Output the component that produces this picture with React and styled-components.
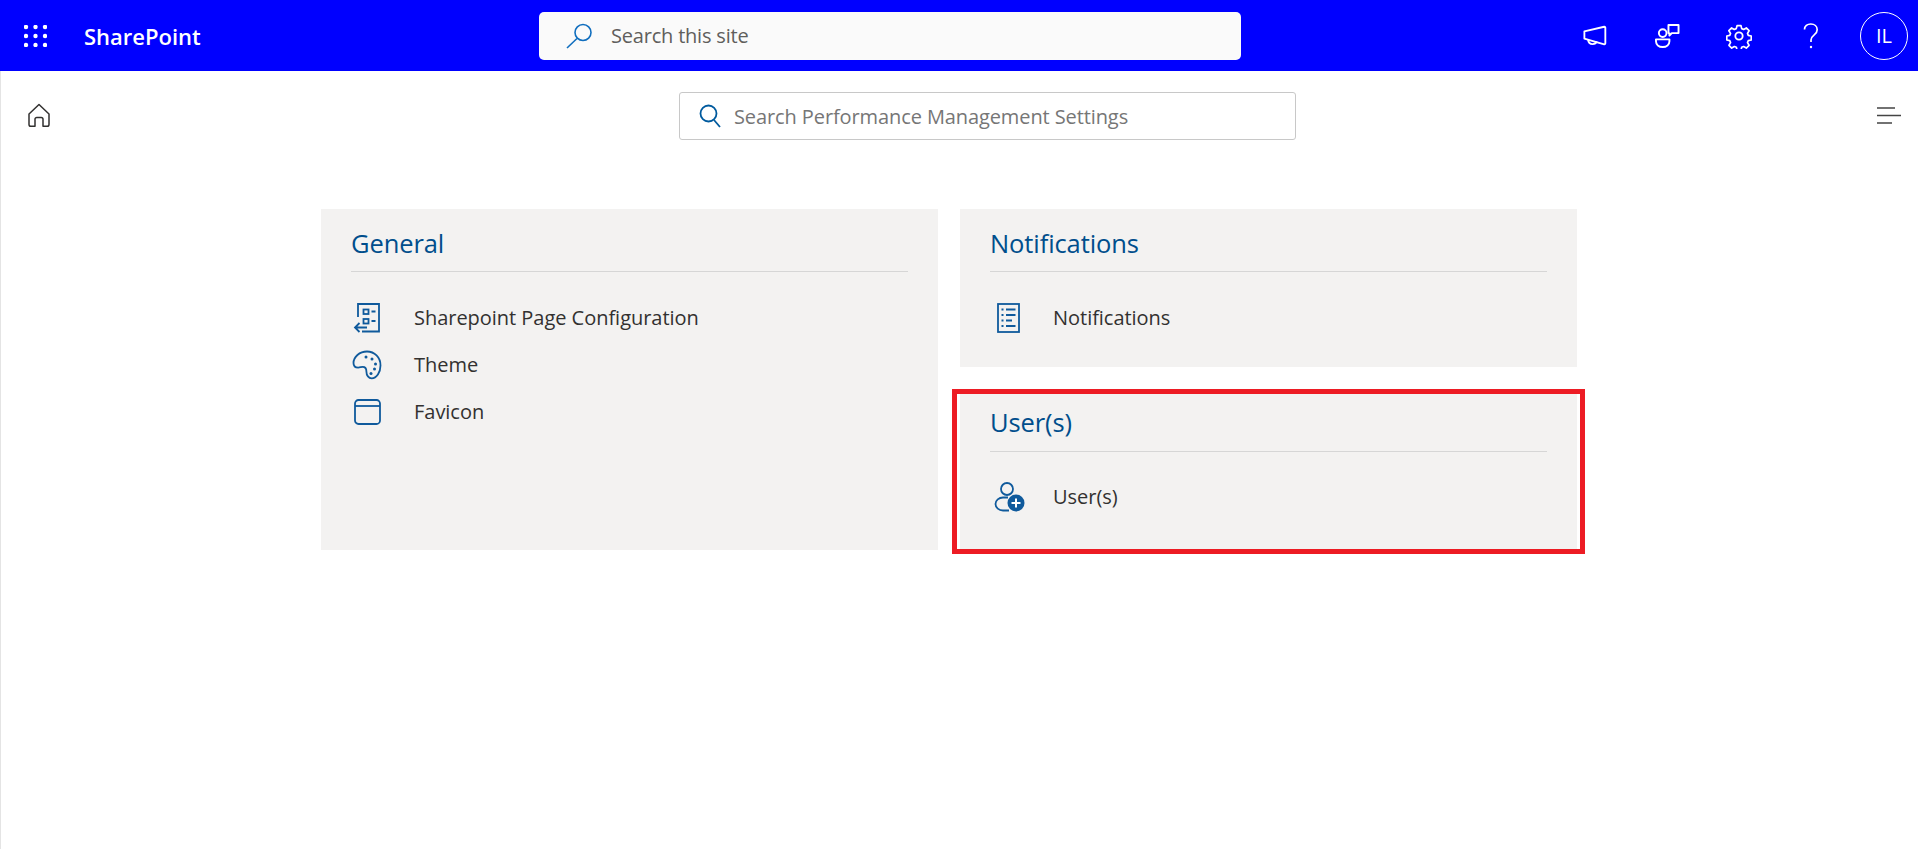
import React from "react";
import styled, { createGlobalStyle } from "styled-components";

const Global = createGlobalStyle`
  html, body { margin: 0; padding: 0; background: #fff; }
  body { font-family: "Open Sans", "Noto Sans", sans-serif; }
  * { box-sizing: border-box; }
`;

const Page = styled.div`
  width: 1918px;
  height: 849px;
  overflow: hidden;
  display: flex;
  flex-direction: column;
`;

const SuiteBar = styled.header`
  height: 71px;
  background: #0000ff;
  display: flex;
  align-items: center;
  color: #fff;
  flex: none;
`;

const Brand = styled.div`
  width: 539px;
  flex: none;
  display: flex;
  align-items: center;
  padding-left: 24px;
`;

const BrandName = styled.span`
  margin-left: 37px;
  font-size: 22px;
  font-weight: 600;
`;

const SiteSearch = styled.div`
  width: 702px;
  height: 48px;
  background: #fafafa;
  border-radius: 5px;
  display: flex;
  align-items: center;
  padding-left: 26px;
  gap: 18px;
  font-size: 20px;
  letter-spacing: -0.2px;
  color: #605e5c;
`;

const SuiteActions = styled.div`
  margin-left: auto;
  display: flex;
  align-items: center;
  padding-right: 10px;
`;

const ActionSlot = styled.div`
  width: 72px;
  height: 48px;
  display: flex;
  align-items: center;
  justify-content: center;
`;

const Avatar = styled.div`
  width: 48px;
  height: 48px;
  margin-left: 13px;
  border: 1px solid #fff;
  border-radius: 50%;
  display: flex;
  align-items: center;
  justify-content: center;
  font-size: 20px;
`;

const Body = styled.main`
  flex: 1;
  border-left: 1px solid #e4e4e4;
  padding-top: 21px;
`;

const Toolbar = styled.div`
  height: 48px;
  display: grid;
  grid-template-columns: 678px 617px 1fr;
  align-items: center;
`;

const HomeCell = styled.div`
  padding-left: 26px;
  display: flex;
  margin-top: -2px;
`;

const MenuCell = styled.div`
  display: flex;
  justify-content: flex-end;
  padding-right: 17px;
  margin-top: -1px;
`;

const SettingsSearch = styled.div`
  height: 48px;
  border: 1px solid #c8c8c8;
  border-radius: 3px;
  display: flex;
  align-items: center;
  padding-left: 19px;
  gap: 13px;
  font-size: 20px;
  letter-spacing: -0.1px;
  color: #767676;
`;

const Grid = styled.div`
  margin: 69px 0 0 320px;
  width: 1256px;
  display: grid;
  grid-template-columns: 617px 617px;
  column-gap: 22px;
  align-items: stretch;
`;

const Column = styled.div`
  display: flex;
  flex-direction: column;
  gap: 22px;
`;

const Card = styled.section`
  position: relative;
  background: #f3f2f1;
  padding: 0 30px;
  height: ${(p) => p.$height}px;
`;

const CardTitle = styled.h2`
  margin: 0;
  height: 63px;
  padding-top: 15px;
  border-bottom: 1px solid #d6d6d6;
  font-size: 25.5px;
  line-height: ${(p) => p.$line || 38}px;
  font-weight: 400;
  letter-spacing: -0.1px;
  color: #004e8c;
`;

const ItemList = styled.div`
  padding-top: ${(p) => p.$top}px;
`;

const Item = styled.div`
  height: 47px;
  display: flex;
  align-items: center;
  font-size: 20px;
  letter-spacing: -0.03px;
  color: #323130;
`;

const ItemIcon = styled.span`
  width: 63px;
  flex: none;
  display: flex;
  padding-left: ${(p) => p.$inset}px;
`;

const Highlight = styled.div`
  position: absolute;
  left: -8px;
  right: -8px;
  top: 0;
  bottom: -4px;
  border: 5px solid #ed1c24;
  pointer-events: none;
`;

const Waffle = () => (
  <svg width="23" height="22" viewBox="0 0 23 22" fill="#fff">
    {[2, 11, 20].map((y) =>
      [2, 11.5, 21].map((x) => <circle key={`${x}-${y}`} cx={x} cy={y} r="2.2" />)
    )}
  </svg>
);

const SiteGlass = () => (
  <svg width="28" height="26" viewBox="0 0 28 26" fill="none" stroke="#106ebe" strokeWidth="1.6">
    <ellipse cx="18" cy="9.5" rx="8" ry="8" />
    <path d="M12 15.5 2 25" />
  </svg>
);

const Megaphone = () => (
  <svg width="24" height="21" viewBox="0 0 26 22" fill="none" stroke="#fff" strokeWidth="2" strokeLinejoin="round">
    <path d="M1.5 6.500 23 1.500c.7-.1 1.200.3 1.200 1v17c0 .7-.5 1.100-1.200 1L1.500 14.500z" />
    <path d="M5.500 15.500c.3 3 2.400 4.800 5 4.800 2.200 0 3.800-1.200 4.400-2.900" />
  </svg>
);

const Community = () => (
  <svg width="25" height="24" viewBox="0 0 26 25" fill="none" stroke="#fff" strokeWidth="2" strokeLinejoin="round">
    <circle cx="8" cy="9.500" r="4" />
    <path d="M1 16h14v2c0 3.500-3 6-7 6s-7-2.500-7-6z" />
    <path d="M14 1h10.500v8.500H17.500l-2.500 2.500V9.500h-1z" />
  </svg>
);

const Gear = () => (
  <svg width="26" height="26" viewBox="0 0 24 24" fill="none" stroke="#fff" strokeWidth="1.7" strokeLinejoin="round">
    <circle cx="12" cy="12" r="3.400" />
    <path d="M10 1.500h4l.7 3 2 .9 2.700-1.600 2.800 2.800-1.600 2.700.8 2 3 .7v4l-3 .7-.8 2 1.600 2.700-2.800 2.800-2.700-1.600-2 .8-.7 3h-4l-.7-3-2-.8-2.700 1.600-2.800-2.800 1.600-2.700-.8-2-3-.7v-4l3-.7.8-2L1.700 6.600l2.800-2.800 2.700 1.600 2-.9z" transform="translate(1.100 1.100) scale(.91)" />
  </svg>
);

const Help = () => (
  <svg width="16" height="26" viewBox="0 0 16 26" fill="none" stroke="#fff" strokeWidth="1.7">
    <path d="M1.500 6.500C1.500 3 4.300 1 7.800 1c3.600 0 6.400 2.300 6.400 5.700 0 2.300-1.200 3.700-3 5.100-1.800 1.400-3.200 2.700-3.200 5.200v2" />
    <circle cx="8" cy="24" r="1.200" fill="#fff" stroke="none" />
  </svg>
);

const Home = () => (
  <svg width="24" height="25" viewBox="0 0 24 25" fill="none" stroke="#323130" strokeWidth="1.500" strokeLinejoin="round">
    <path d="M12 1.500 2 11v10.500c0 1 .8 1.800 1.800 1.800H8v-7c0-1 .8-1.800 1.800-1.800h4.400c1 0 1.800.8 1.800 1.800v7h4.200c1 0 1.800-.8 1.800-1.800V11z" />
  </svg>
);

const Lines = () => (
  <svg width="24" height="17" viewBox="0 0 24 17" stroke="#444" strokeWidth="1.500">
    <path d="M0 1h18M0 8.500h24M0 16h15" />
  </svg>
);

const Glass = () => (
  <svg width="22" height="24" viewBox="0 0 22 24" fill="none" stroke="#005a9e" strokeWidth="1.800">
    <circle cx="9.500" cy="9.500" r="8" />
    <path d="M15 16l6 7" />
  </svg>
);

const blue = "#0f5a9c";

const PageConfig = () => (
  <svg width="28" height="30" viewBox="0 0 28 30" fill="none" stroke={blue} strokeWidth="1.800">
    <path d="M5 14V1h21v27.500H9" />
    <rect x="10.500" y="6.500" width="5" height="4.500" />
    <rect x="10.500" y="16" width="5" height="4.500" />
    <path d="M18.500 8.500h4M18.500 18h4M14 24.500H2M6.500 20 2 24.500 6.500 29" />
  </svg>
);

const Palette = () => (
  <svg width="30" height="30" viewBox="0 0 30 30" fill="none" stroke={blue} strokeWidth="1.800">
    <path d="M15 1.500C7.500 1.500 1.500 7 1.500 13c0 2.800 2 4.600 4.700 4.600 1.700 0 3-.7 4.500-.7 2.500 0 3.700 1.500 3.700 4.500 0 4 2.300 7 5.300 7 4.800 0 8.800-6 8.800-13C28.500 7.500 22.500 1.500 15 1.500z" />
    <g fill={blue} stroke="none">
      <circle cx="14" cy="7" r="1.500" />
      <circle cx="20" cy="9" r="1.500" />
      <circle cx="23.500" cy="14" r="1.500" />
      <circle cx="22.500" cy="19" r="1.500" />
      <circle cx="19" cy="23.500" r="1.500" />
    </g>
  </svg>
);

const Favicon = () => (
  <svg width="27" height="26" viewBox="0 0 27 26" fill="none" stroke={blue} strokeWidth="1.800">
    <rect x="1" y="1" width="25" height="24" rx="3.500" />
    <path d="M1 7h25" />
  </svg>
);

const Report = () => (
  <svg width="23" height="30" viewBox="0 0 23 30" fill="none" stroke={blue} strokeWidth="1.800">
    <rect x="1" y="1" width="21" height="28" />
    <path d="M4.500 6.500h2M9 6.500h9.500M4.500 12h2M9 12h9.500M4.500 17.500h2M9 17.500h6M4.500 23h2M9 23h9.500" />
  </svg>
);

const UserAdd = () => (
  <svg width="31" height="30" viewBox="0 0 31 30" fill="none" stroke={blue} strokeWidth="1.800">
    <circle cx="13" cy="7" r="6" />
    <path d="M15 28.500H9c-4 0-7.500-2.700-7.500-6.500s3.500-6.500 7.500-6.500h5" />
    <circle cx="22" cy="21" r="8.500" fill={blue} stroke="none" />
    <path d="M22 16.500v9M17.500 21h9" stroke="#fff" strokeWidth="2" />
  </svg>
);

const Row = ({ icon, inset, children }) => (
  <Item>
    <ItemIcon $inset={inset}>{icon}</ItemIcon>
    <span>{children}</span>
  </Item>
);

export default function App() {
  return (
    <Page>
      <Global />
      <SuiteBar>
        <Brand>
          <Waffle />
          <BrandName>SharePoint</BrandName>
        </Brand>
        <SiteSearch>
          <SiteGlass />
          <span>Search this site</span>
        </SiteSearch>
        <SuiteActions>
          <ActionSlot><Megaphone /></ActionSlot>
          <ActionSlot><Community /></ActionSlot>
          <ActionSlot><Gear /></ActionSlot>
          <ActionSlot><Help /></ActionSlot>
          <Avatar>IL</Avatar>
        </SuiteActions>
      </SuiteBar>
      <Body>
        <Toolbar>
          <HomeCell><Home /></HomeCell>
          <SettingsSearch>
            <Glass />
            <span>Search Performance Management Settings</span>
          </SettingsSearch>
          <MenuCell><Lines /></MenuCell>
        </Toolbar>
        <Grid>
          <Card $height={341}>
            <CardTitle>General</CardTitle>
            <ItemList $top={22}>
              <Row icon={<PageConfig />} inset={2}>Sharepoint Page Configuration</Row>
              <Row icon={<Palette />} inset={1}>Theme</Row>
              <Row icon={<Favicon />} inset={3}>Favicon</Row>
            </ItemList>
          </Card>
          <Column>
            <Card $height={158}>
              <CardTitle>Notifications</CardTitle>
              <ItemList $top={22}>
                <Row icon={<Report />} inset={7}>Notifications</Row>
              </ItemList>
            </Card>
            <Card $height={161}>
              <CardTitle $line={36}>User(s)</CardTitle>
              <ItemList $top={21}>
                <Row icon={<UserAdd />} inset={4}>User(s)</Row>
              </ItemList>
              <Highlight />
            </Card>
          </Column>
        </Grid>
      </Body>
    </Page>
  );
}
